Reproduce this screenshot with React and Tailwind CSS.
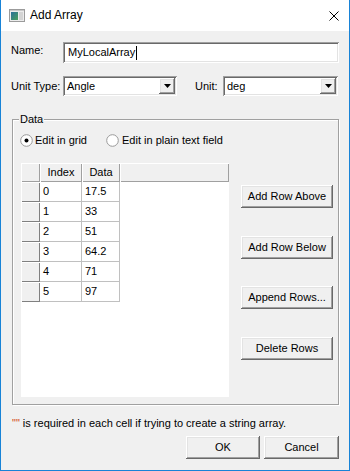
const raised =
  "shadow-[inset_-1px_-1px_0_#696969,inset_1px_1px_0_#ffffff,inset_-2px_-2px_0_#a0a0a0,inset_2px_2px_0_#e3e3e3]";
const sunken =
  "shadow-[inset_1px_1px_0_#a0a0a0,inset_-1px_-1px_0_#ffffff,inset_2px_2px_0_#696969,inset_-2px_-2px_0_#e3e3e3]";
const header = "shadow-[inset_1px_1px_0_#ffffff,inset_-1px_-1px_0_#a0a0a0] bg-[#f0f0f0]";

function Select({ value, width }) {
  return (
    <div className={`${sunken} bg-white h-[20px] flex items-stretch p-[2px] ${width}`}>
      <div className="flex-1 flex items-center pl-[2px]">{value}</div>
      <div className={`${raised} bg-[#f0f0f0] w-[16px] flex items-center justify-center`}>
        <svg width="7" height="4" viewBox="0 0 7 4">
          <path d="M0 0H7L3.5 4Z" fill="#000" />
        </svg>
      </div>
    </div>
  );
}

function Radio({ checked }) {
  return (
    <svg width="13" height="13" viewBox="0 0 13 13" className="shrink-0">
      <circle cx="6.5" cy="6.5" r="5.8" fill="#fff" stroke="#9a9a9a" strokeWidth="1" />
      {checked && <circle cx="6.5" cy="6.5" r="2" fill="#000" />}
    </svg>
  );
}

function Btn({ children, className = "" }) {
  return (
    <div className={`${raised} bg-[#f0f0f0] h-[23px] flex items-center justify-center ${className}`}>
      {children}
    </div>
  );
}

export default function App() {
  const rows = [
    ["0", "17.5"],
    ["1", "33"],
    ["2", "51"],
    ["3", "64.2"],
    ["4", "71"],
    ["5", "97"],
  ];
  return (
    <div className="w-[350px] h-[471px] flex flex-col border-x border-b border-[#1883d7] bg-[#f0f0f0] text-[11px] leading-[13px] text-black font-['Liberation_Sans',Arial,sans-serif] overflow-hidden">
      {/* Title bar */}
      <div className="h-[31px] bg-white flex items-center shrink-0">
        <svg width="16" height="13" viewBox="0 0 16 13" className="ml-[8px]">
          <rect x="0.5" y="0.5" width="15" height="12" fill="#ececec" stroke="#9b9b9b" />
          <defs>
            <linearGradient id="g" x1="0" y1="0" x2="1" y2="1">
              <stop offset="0" stopColor="#2a6f9a" />
              <stop offset="1" stopColor="#4aa05a" />
            </linearGradient>
          </defs>
          <rect x="2" y="3" width="7" height="8" fill="url(#g)" />
          <rect x="10" y="3" width="4" height="8" fill="#d4d4d4" />
          <rect x="1" y="1" width="14" height="1" fill="#c8c8c8" />
        </svg>
        <span className="ml-[5px] text-[12px]">Add Array</span>
        <svg width="10" height="10" viewBox="0 0 10 10" className="ml-auto mr-[10px]">
          <path d="M0.5 0.5L9.5 9.5M9.5 0.5L0.5 9.5" stroke="#000" strokeWidth="1" />
        </svg>
      </div>

      {/* Body */}
      <div className="flex flex-col flex-1">
        {/* Name */}
        <div className="mt-[11px] h-[21px] flex items-stretch pl-[10px]">
          <div className="w-[52px] pt-[2px]">Name:</div>
          <div className={`${sunken} bg-white w-[276px] flex items-center pl-[5px]`}>
            <span>MyLocalArray</span>
            <span className="w-[1px] h-[14px] bg-black ml-[1px]" />
          </div>
        </div>

        {/* Unit type */}
        <div className="mt-[13px] h-[20px] flex items-center pl-[10px]">
          <div className="w-[52px]">Unit Type:</div>
          <Select value="Angle" width="w-[114px]" />
          <div className="ml-[18px] w-[28px]">Unit:</div>
          <Select value="deg" width="w-[115px]" />
        </div>

        {/* Data group */}
        <div className="relative mt-[23px] ml-[11px] w-[327px] h-[286px] border border-[#a0a0a0] shadow-[1px_1px_0_#ffffff,inset_1px_1px_0_#ffffff] pl-[7px]">
          <span className="absolute top-[-7px] left-[6px] px-[1px] bg-[#f0f0f0]">Data</span>

          <div className="mt-[14px] h-[13px] flex items-center">
            <div className="w-[86px] flex items-center">
              <Radio checked />
              <span className="ml-[2px]">Edit in grid</span>
            </div>
            <Radio />
            <span className="ml-[3px]">Edit in plain text field</span>
          </div>

          <div className="mt-[16px] flex items-start">
            {/* Grid */}
            <div className="ml-[1px] w-[208px] h-[234px] bg-white flex flex-col">
              <div className="h-[19px] flex shrink-0">
                <div className={`${header} w-[19px]`} />
                <div className={`${header} w-[42px] flex items-center justify-center`}>Index</div>
                <div className={`${header} w-[38px] flex items-center justify-center`}>Data</div>
                <div className={`${header} flex-1`} />
              </div>
              {rows.map(([i, d]) => (
                <div key={i} className="h-[20px] flex shrink-0">
                  <div className="w-[19px] bg-[#f0f0f0] shadow-[inset_1px_1px_0_#ffffff,inset_-1px_-1px_0_#808080,inset_1px_0_0_#a0a0a0]" />
                  <div className="w-[42px] border-r border-b border-[#c0c0c0] flex items-center pl-[3px]">{i}</div>
                  <div className="w-[38px] border-r border-b border-[#c0c0c0] flex items-center pl-[3px]">{d}</div>
                </div>
              ))}
            </div>

            {/* Buttons */}
            <div className="ml-[12px] w-[92px] flex flex-col">
              <Btn className="mt-[22px]">Add Row Above</Btn>
              <Btn className="mt-[28px]">Add Row Below</Btn>
              <Btn className="mt-[27px]">Append Rows...</Btn>
              <Btn className="mt-[28px]">Delete Rows</Btn>
            </div>
          </div>
        </div>

        {/* Footer note */}
        <div className="mt-[12px] ml-[11px] whitespace-nowrap">
          <span className="text-[#d24a14]">""</span> is required in each cell if trying to create a string array.
        </div>

        {/* OK / Cancel */}
        <div className="mt-[6px] flex justify-end mr-[10px]">
          <Btn className="w-[74px]">OK</Btn>
          <Btn className="w-[75px] ml-[4px]">Cancel</Btn>
        </div>
      </div>
    </div>
  );
}
